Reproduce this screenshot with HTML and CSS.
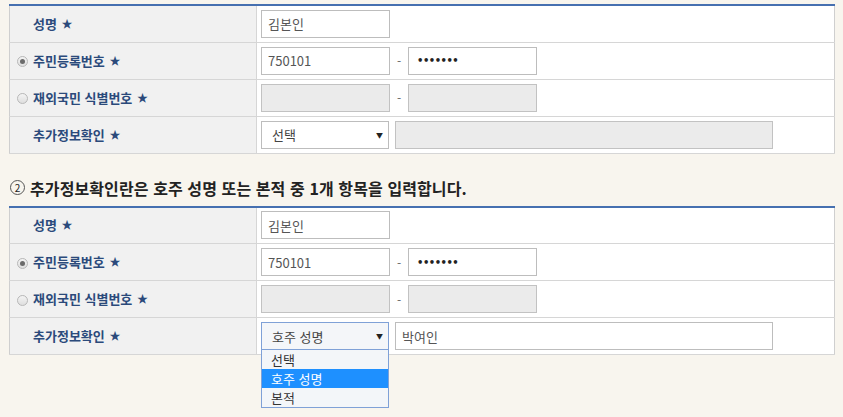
FILE: index.html
```html
<!DOCTYPE html>
<html lang="ko">
<head>
<meta charset="utf-8">
<link rel="stylesheet" href="styles.css">
</head>
<body>
<div class="page">
  <table class="form">
    <tr>
      <th><span class="slot"></span>성명 <span class="star">★</span></th>
      <td><input class="inp" type="text" value="김본인"></td>
    </tr>
    <tr>
      <th><span class="slot"><span class="radio on"></span></span>주민등록번호 <span class="star">★</span></th>
      <td><div class="pair"><input class="inp" type="text" value="750101"><span class="dash">-</span><input class="inp pw" type="text" value="•••••••"></div></td>
    </tr>
    <tr>
      <th><span class="slot"><span class="radio"></span></span>재외국민 식별번호 <span class="star">★</span></th>
      <td><div class="pair"><input class="inp dis" type="text" disabled><span class="dash">-</span><input class="inp dis" type="text" disabled></div></td>
    </tr>
    <tr>
      <th><span class="slot"></span>추가정보확인 <span class="star">★</span></th>
      <td><div class="combo"><div class="sel"><span>선택</span><span class="arr">▼</span></div><input class="inp wide dis" type="text" disabled></div></td>
    </tr>
  </table>

  <h2 class="note"><span class="num">2</span>추가정보확인란은 호주 성명 또는 본적 중 1개 항목을 입력합니다.</h2>

  <table class="form">
    <tr>
      <th><span class="slot"></span>성명 <span class="star">★</span></th>
      <td><input class="inp" type="text" value="김본인"></td>
    </tr>
    <tr>
      <th><span class="slot"><span class="radio on"></span></span>주민등록번호 <span class="star">★</span></th>
      <td><div class="pair"><input class="inp" type="text" value="750101"><span class="dash">-</span><input class="inp pw" type="text" value="•••••••"></div></td>
    </tr>
    <tr>
      <th><span class="slot"><span class="radio"></span></span>재외국민 식별번호 <span class="star">★</span></th>
      <td><div class="pair"><input class="inp dis" type="text" disabled><span class="dash">-</span><input class="inp dis" type="text" disabled></div></td>
    </tr>
    <tr>
      <th><span class="slot"></span>추가정보확인 <span class="star">★</span></th>
      <td><div class="combo"><div class="selwrap"><div class="sel focus"><span>호주 성명</span><span class="arr">▼</span></div>
        <ul class="list"><li>선택</li><li class="hl">호주 성명</li><li>본적</li></ul></div><input class="inp wide" type="text" value="박여인"></div></td>
    </tr>
  </table>
</div>
</body>
</html>
```
FILE: styles.css
```css
* { box-sizing: border-box; }
html, body { min-height: 100%; }
body {
  margin: 0;
  background: #f8f5ee;
  font-family: "Noto Sans CJK KR", "Noto Sans", sans-serif;
  color: #333;
}
.page { padding: 4px 8px 70px 9px; }
.form {
  width: 826px;
  border-collapse: collapse;
  border-top: 2px solid #4670b0;
  border-left: 1px solid #cfcfcf;
  border-right: 1px solid #cfcfcf;
  background: #fff;
}
.form tr { height: 37px; border-bottom: 1px solid #d6d6d6; }
.form th {
  width: 247px;
  background: #f1f1f1;
  border-right: 1px solid #d6d6d6;
  text-align: left;
  font-weight: bold;
  font-size: 13px;
  line-height: 16px;
  color: #2b4a7b;
  padding: 0 0 0 7px;
  white-space: nowrap;
}
.form td { padding: 0 0 0 4px; vertical-align: middle; }
.slot { display: inline-block; width: 16px; vertical-align: middle; height: 11px; }
.radio {
  display: block;
  width: 11px; height: 11px;
  border-radius: 50%;
  border: 1px solid #b8b8b8;
  background: linear-gradient(#f4f4f4, #dedede);
  position: relative;
}
.radio.on::after {
  content: "";
  position: absolute;
  left: 2px; top: 2px;
  width: 5px; height: 5px;
  border-radius: 50%;
  background: #6b6b6b;
}
.star { font-size: 11px; color: #2b4a7b; margin-left: 1px; position: relative; top: -1px; }
.inp {
  display: block;
  width: 129px;
  height: 28px;
  border: 1px solid #bdbdbd;
  background: #fff;
  font-family: "Noto Sans CJK KR", sans-serif;
  font-size: 13px;
  color: #555;
  padding: 0 6px;
  outline: none;
}
.inp.dis { background: #ebebeb; border-color: #c2c2c2; }
.inp.pw { font-size: 10px; font-weight: bold; letter-spacing: -0.5px; color: #222; padding-left: 8px; font-family: "DejaVu Sans", sans-serif; }
.pair { display: flex; align-items: center; }
.dash { width: 18px; text-align: center; font-size: 12px; color: #666; }
.combo { display: flex; align-items: center; gap: 6px; }
.inp.wide { width: 378px; }
.selwrap { position: relative; }
.sel {
  width: 128px;
  height: 28px;
  border: 1px solid #bdbdbd;
  background: #fff;
  display: flex;
  align-items: center;
  justify-content: space-between;
  padding: 0 5px 0 10px;
  font-size: 13px;
  color: #444;
}
.sel.focus { border-color: #7fa1d7; background: #f4f6f9; }
.arr { font-size: 7px; color: #222; }
.list {
  position: absolute;
  z-index: 10;
  left: 0; top: 28px;
  width: 128px;
  margin: 0;
  padding: 0;
  list-style: none;
  border: 1px solid #7fa1d7;
  border-top: none;
  background: #f3f6f9;
  font-size: 13px;
  color: #333;
}
.list li { height: 19px; line-height: 19px; padding-left: 9px; }
.list li.hl { background: #1e90ff; color: #fff; }
.note {
  margin: 24px 0 8px 1px;
  font-size: 16px;
  line-height: 20px;
  font-weight: bold;
  letter-spacing: 0.1px;
  color: #222;
  display: flex;
  align-items: center;
}
.num {
  width: 15px; height: 15px;
  border: 1px solid #555;
  border-radius: 50%;
  font-size: 10px;
  line-height: 13px;
  text-align: center;
  margin-right: 5px;
  font-weight: normal;
  letter-spacing: 0;
}
```
